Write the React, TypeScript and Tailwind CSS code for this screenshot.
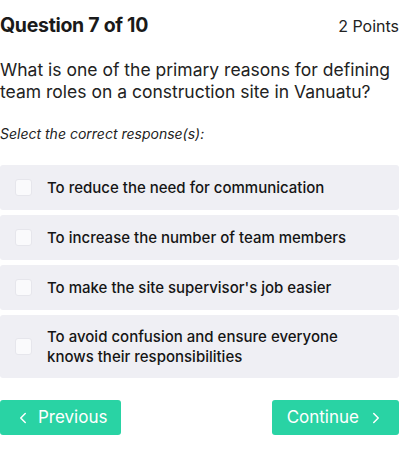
import { ChevronLeft, ChevronRight } from "lucide-react";

const options = [
  "To reduce the need for communication",
  "To increase the number of team members",
  "To make the site supervisor's job easier",
  "To avoid confusion and ensure everyone knows their responsibilities",
];

function App() {
  return (
    <div className="w-[399px] bg-white text-[#1a1a1a] font-['Inter',sans-serif]">
      <div className="flex items-center justify-between pt-[11px]">
        <h1 className="text-[19.5px] font-bold tracking-[-0.3px]">Question 7 of 10</h1>
        <span className="text-[16px] text-[#222]">2 Points</span>
      </div>

      <p className="mt-[19px] text-[17.5px] leading-[22px] text-[#222]">
        What is one of the primary reasons for defining team roles on a construction site in Vanuatu?
      </p>

      <p className="mt-[20px] text-[14px] italic text-[#222]">Select the correct response(s):</p>

      <div className="mt-[21px] flex flex-col gap-[5px]">
        {options.map((opt) => (
          <label
            key={opt}
            className="flex min-h-[45px] cursor-pointer items-center gap-[15px] rounded-[3px] bg-[#efeff4] py-[11.5px] pl-[15px] pr-[40px]"
          >
            <span className="h-[17px] w-[17px] shrink-0 rounded-[3px] border border-[#e6e6ec] bg-[#fafafc]" />
            <span className="text-[15px] font-medium leading-[20px] text-[#151515]">{opt}</span>
          </label>
        ))}
      </div>

      <div className="mt-[22px] flex items-center justify-between">
        <button className="flex h-[35px] w-[121px] items-center gap-[6px] rounded-[3px] bg-[#29d3a4] pl-[14px] text-[17px] text-white">
          <ChevronLeft size={18} strokeWidth={2} />
          Previous
        </button>
        <button className="flex h-[35px] w-[127px] items-center justify-end gap-[8px] rounded-[3px] bg-[#29d3a4] pr-[14px] text-[17px] text-white">
          Continue
          <ChevronRight size={18} strokeWidth={2} />
        </button>
      </div>
    </div>
  );
}

export default App;
